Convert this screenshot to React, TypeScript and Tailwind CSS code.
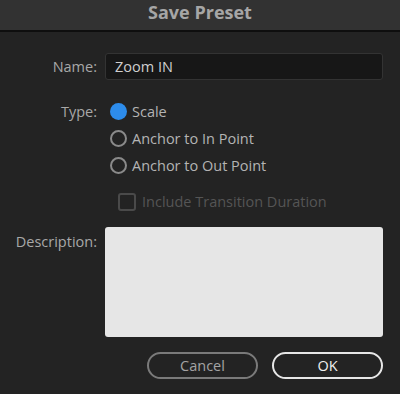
import React from 'react';

const font = { fontFamily: '"Open Sans", "Liberation Sans", sans-serif' };

function Radio({ checked, label }: { checked?: boolean; label: string }) {
  return (
    <div className="flex h-[27px] items-center">
      {checked ? (
        <span className="h-[17px] w-[17px] rounded-full bg-[#2d8ceb]" />
      ) : (
        <span className="h-[17px] w-[17px] rounded-full border-2 border-[#8a8a8a]" />
      )}
      <span className="ml-[5px] text-[14.5px] text-[#b4b4b4]">{label}</span>
    </div>
  );
}

export default function App() {
  const [type, setType] = React.useState('scale');

  return (
    <div className="h-[394px] w-[400px] overflow-hidden bg-[#232323]" style={font}>
      <div className="flex h-[32px] items-center justify-center border-b-2 border-[#0e0e0e] bg-[#323232] pb-[6px]">
        <span className="text-[18px] font-bold text-[#a6a6a6]">Save Preset</span>
      </div>

      <div className="grid grid-cols-[97px_1fr] gap-x-[8px] pr-[17px] pt-[21px]">
        <div className="flex h-[27px] items-center justify-end text-[14.5px] text-[#a8a8a8]">Name:</div>
        <div className="flex h-[27px] items-center rounded-[3px] border border-[#333] bg-[#171717] px-[9px] text-[14.5px] text-[#cfcfcf]">
          Zoom IN
        </div>

        <div className="mt-[18px] flex h-[27px] items-center justify-end text-[14.5px] text-[#a8a8a8]">Type:</div>
        <div className="mt-[18px] pl-[5px]">
          <div onClick={() => setType('scale')}>
            <Radio checked={type === 'scale'} label="Scale" />
          </div>
          <div onClick={() => setType('in')}>
            <Radio checked={type === 'in'} label="Anchor to In Point" />
          </div>
          <div onClick={() => setType('out')}>
            <Radio checked={type === 'out'} label="Anchor to Out Point" />
          </div>
        </div>

        <div />
        <div className="mt-[13px] flex h-[20px] items-center pl-[13px]">
          <span className="h-[18px] w-[18px] rounded-[3px] border-2 border-[#4a4a4a]" />
          <span className="ml-[6px] text-[14.5px] text-[#555555]">Include Transition Duration</span>
        </div>

        <div className="mt-[15px] pt-[4px] text-right text-[14.5px] text-[#a8a8a8]">Description:</div>
        <div className="mt-[15px] h-[110px] rounded-[3px] bg-[#e6e6e6]" />

        <div />
        <div className="mt-[15px] flex justify-end gap-[14px]">
          <button className="flex h-[27px] w-[111px] items-center justify-center rounded-full border-2 border-[#7a7a7a] text-[14.5px] text-[#a3a3a3]">
            Cancel
          </button>
          <button className="flex h-[27px] w-[111px] items-center justify-center rounded-full border-2 border-[#e6e6e6] text-[14.5px] text-[#efefef]">
            OK
          </button>
        </div>
      </div>
    </div>
  );
}
